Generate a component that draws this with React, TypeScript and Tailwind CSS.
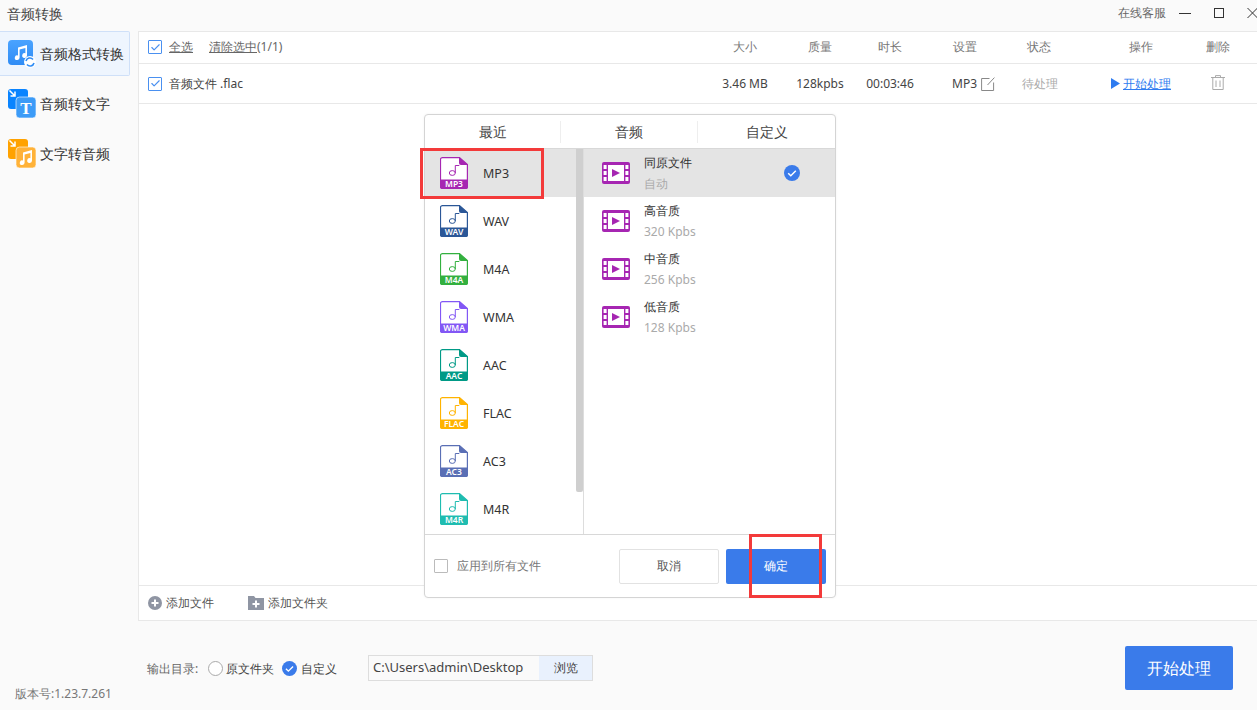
import { Check } from 'lucide-react';

const FONT = 'font-["Noto_Sans","Noto_Sans_CJK_SC",sans-serif]';

const formats = [
    { name: 'MP3', color: '#a626b2' },
    { name: 'WAV', color: '#2b5797' },
    { name: 'M4A', color: '#33b03f' },
    { name: 'WMA', color: '#8257f5' },
    { name: 'AAC', color: '#009a86' },
    { name: 'FLAC', color: '#ffb300' },
    { name: 'AC3', color: '#5a6fb5' },
    { name: 'M4R', color: '#1fbcb0' },
];

const qualities = [
    { name: '同原文件', sub: '自动' },
    { name: '高音质', sub: '320 Kpbs' },
    { name: '中音质', sub: '256 Kpbs' },
    { name: '低音质', sub: '128 Kpbs' },
];

function FileIcon({ name, color }: { name: string; color: string }) {
    return (
        <svg width="28" height="32" viewBox="0 0 28 32" className="shrink-0">
            <path d="M2.5 0.6H19.5L27.4 7.5V29.5a2 2 0 0 1-2 2H2.5a2 2 0 0 1-2-2V2.6a2 2 0 0 1 2-2z" fill="#fff" stroke={color} strokeWidth="1.2" />
            <path d="M19 0l9 8h-7a2 2 0 0 1-2-2z" fill={color} />
            <path d="M0 22.5h28v7a2.5 2.5 0 0 1-2.5 2.5h-23A2.5 2.5 0 0 1 0 29.5z" fill={color} />
            <ellipse cx="12.3" cy="16" rx="3" ry="2.4" fill="none" stroke={color} strokeWidth="1" />
            <path d="M15.3 16V8.5h4" fill="none" stroke={color} strokeWidth="1" />
            <text x="14" y="30.3" textAnchor="middle" fontSize="8.5" fontWeight="600" fill="#fff" fontFamily="Noto Sans, sans-serif">{name}</text>
        </svg>
    );
}

function FilmIcon() {
    return (
        <svg width="28" height="22" viewBox="0 0 28 22" className="shrink-0">
            <rect width="28" height="22" rx="2" fill="#a626b2" />
            <rect x="6" y="3" width="16" height="16" fill="#fff" />
            <rect x="1.6" y="3" width="3" height="4" fill="#fff" />
            <rect x="1.6" y="9" width="3" height="4" fill="#fff" />
            <rect x="1.6" y="15" width="3" height="4" fill="#fff" />
            <rect x="23.4" y="3" width="3" height="4" fill="#fff" />
            <rect x="23.4" y="9" width="3" height="4" fill="#fff" />
            <rect x="23.4" y="15" width="3" height="4" fill="#fff" />
            <path d="M10 7l8 4-8 4z" fill="#a626b2" />
        </svg>
    );
}

function NoteGlyph({ x, y, s }: { x: number; y: number; s: number }) {
    return (
        <g transform={`translate(${x} ${y}) scale(${s})`} fill="#fff">
            <path d="M4 2.5L13 0v10.5a2.4 2.4 0 1 1-1.6-2.2V3L5.6 4.6v8a2.4 2.4 0 1 1-1.6-2.2z" />
        </g>
    );
}

function FormatIcon() {
    return (
        <svg width="28" height="28" viewBox="0 0 28 28" className="shrink-0">
            <defs>
                <linearGradient id="fmt" x1="0" y1="0" x2="0" y2="1">
                    <stop offset="0" stopColor="#4aa3ff" />
                    <stop offset="1" stopColor="#2f8cf5" />
                </linearGradient>
            </defs>
            <rect width="25" height="25" rx="4" fill="url(#fmt)" />
            <NoteGlyph x={6} y={5} s={1} />
            <circle cx="22" cy="22" r="6" fill="#fff" />
            <path d="M18 21a4 4 0 0 1 7-1.5M26 23a4 4 0 0 1-7 1.5" fill="none" stroke="#2f8cf5" strokeWidth="1.6" />
        </svg>
    );
}

function StackIcon({ back, front, children }: { back: string; front: string; children: React.ReactNode }) {
    return (
        <svg width="28" height="29" viewBox="0 0 28 29" className="shrink-0">
            <rect width="20" height="20" rx="3" fill={back} />
            <rect x="8" y="8" width="20" height="21" rx="3.5" fill={front} stroke="#fff" strokeWidth="0.6" />
            <path d="M1.5 1.5l5 5M7 2.5v4.5H2.5" fill="none" stroke="#fff" strokeWidth="1.5" />
            {children}
        </svg>
    );
}

function Checkbox() {
    return (
        <span className="flex h-[14px] w-[14px] shrink-0 items-center justify-center rounded-[1px] border border-[#4a90f0] bg-white">
            <Check size={11} strokeWidth={2.5} className="text-[#4a90f0]" />
        </span>
    );
}

function CheckedDot({ size }: { size: number }) {
    return (
        <svg width={size} height={size} viewBox="0 0 16 16" className="shrink-0">
            <circle cx="8" cy="8" r="8" fill="#3a7bea" />
            <path d="M4.2 8.2l2.6 2.6 5-5" fill="none" stroke="#fff" strokeWidth="1.5" />
        </svg>
    );
}

function SideItem({ icon, label, active }: { icon: React.ReactNode; label: string; active?: boolean }) {
    return (
        <div className={`flex h-[45px] w-[130px] items-center gap-[4px] rounded-r-[2px] border-y border-r pl-[8px] ${active ? 'border-[#cfe0f8] bg-[#eef5fe]' : 'border-transparent'}`}>
            {icon}
            <span className="text-[14px] whitespace-nowrap text-[#333]">{label}</span>
        </div>
    );
}

const COLS = 'grid grid-cols-[556px_100px_50px_90px_60px_88px_116px_38px] items-center text-center';

export default function App() {
    return (
        <div className={`relative flex h-[710px] w-[1257px] flex-col overflow-hidden bg-[#fafafa] ${FONT}`}>
            <header className="flex h-[31px] shrink-0 items-center pb-[5px] pl-[7px]">
                <span className="text-[14px] font-medium text-[#444]">音频转换</span>
                <span className="ml-auto text-[12px] text-[#666]">在线客服</span>
                <svg width="12" height="10" viewBox="0 0 12 10" className="ml-[13px]">
                    <path d="M0 5.5h12" stroke="#333" strokeWidth="1" />
                </svg>
                <svg width="10" height="10" viewBox="0 0 10 10" className="ml-[23px]">
                    <rect x="0.5" y="0.5" width="9" height="9" fill="none" stroke="#333" strokeWidth="1" />
                </svg>
                <svg width="11" height="10" viewBox="0 0 11 10" className="-mr-[1px] ml-[23px]">
                    <path d="M0.5 0l10 10M10.5 0l-10 10" stroke="#333" strokeWidth="1" />
                </svg>
            </header>

            <div className="flex min-h-0 flex-1">
                <aside className="flex w-[138px] shrink-0 flex-col">
                    <SideItem active icon={<FormatIcon />} label="音频格式转换" />
                    <div className="mt-[5px]">
                        <SideItem
                            label="音频转文字"
                            icon={
                                <StackIcon back="#0a84ff" front="#3c9bf7">
                                    <text x="18" y="25" textAnchor="middle" fontSize="17" fontWeight="700" fill="#fff" fontFamily="Liberation Serif, serif">T</text>
                                </StackIcon>
                            }
                        />
                    </div>
                    <div className="mt-[5px]">
                        <SideItem
                            label="文字转音频"
                            icon={
                                <StackIcon back="#ffa200" front="#ffb238">
                                    <NoteGlyph x={11} y={11} s={1} />
                                </StackIcon>
                            }
                        />
                    </div>
                    <div className="mt-auto pb-[7px] pl-[15px] text-[12px] text-[#777]">版本号:1.23.7.261</div>
                </aside>

                <main className="flex min-w-0 flex-1 flex-col">
                    <section className="flex h-[590px] shrink-0 flex-col border-y border-l border-[#e8e8e8] bg-white">
                        <div className={`${COLS} h-[32px] shrink-0 border-b border-[#e8e8e8] pb-[1px] text-[12px] text-[#777]`}>
                            <div className="flex items-center pl-[9px] text-[#666]">
                                <Checkbox />
                                <span className="ml-[7px] underline">全选</span>
                                <span className="ml-[16px] underline">清除选中</span>
                                <span>(1/1)</span>
                            </div>
                            <span>大小</span>
                            <span>质量</span>
                            <span>时长</span>
                            <span>设置</span>
                            <span>状态</span>
                            <span>操作</span>
                            <span>删除</span>
                        </div>
                        <div className={`${COLS} h-[40px] shrink-0 border-b border-[#e8e8e8] text-[12px] text-[#444]`}>
                            <div className="flex items-center pl-[9px]">
                                <Checkbox />
                                <span className="ml-[7px]">音频文件 .flac</span>
                            </div>
                            <span className="whitespace-nowrap">3.46 MB</span>
                            <span className="whitespace-nowrap">128kpbs</span>
                            <span className="whitespace-nowrap">00:03:46</span>
                            <span className="flex items-center justify-center gap-[4px] pl-[17px]">
                                MP3
                                <svg width="14" height="14" viewBox="0 0 14 14" className="shrink-0">
                                    <path d="M8.5 1.5H.6v12h12V5.5M6.5 8L13.4.6" fill="none" stroke="#888" strokeWidth="1" />
                                </svg>
                            </span>
                            <span className="pl-[2px] text-[#aaa]">待处理</span>
                            <span className="flex items-center justify-center gap-[3px] whitespace-nowrap text-[#2f7cf0]">
                                <svg width="9" height="11" viewBox="0 0 9 11" className="shrink-0">
                                    <path d="M0 0l9 5.5L0 11z" fill="#2f7cf0" />
                                </svg>
                                <span className="underline">开始处理</span>
                            </span>
                            <span className="flex justify-center pb-[3px]">
                                <svg width="14" height="15" viewBox="0 0 14 15">
                                    <path d="M0 2.5h14M4.5 2.5V.6h5v1.9M1.8 2.5v12h10.4v-12M5 5.5v6.5M9 5.5v6.5" fill="none" stroke="#aaa" strokeWidth="1" />
                                </svg>
                            </span>
                        </div>
                        <div className="flex-1" />
                        <div className="flex h-[35px] shrink-0 items-center border-t border-[#e8e8e8] pl-[9px] text-[12px] text-[#555]">
                            <svg width="14" height="14" viewBox="0 0 14 14" className="shrink-0">
                                <circle cx="7" cy="7" r="7" fill="#8f95a3" />
                                <path d="M7 3.5v7M3.5 7h7" stroke="#fff" strokeWidth="2" />
                            </svg>
                            <span className="ml-[4px]">添加文件</span>
                            <svg width="16" height="14" viewBox="0 0 16 14" className="ml-[34px] shrink-0">
                                <path d="M0 0h6l1.5 2H16v12H0z" fill="#8f95a3" />
                                <path d="M8 4.5v7M4.5 8h7" stroke="#fff" strokeWidth="2" />
                            </svg>
                            <span className="ml-[4px]">添加文件夹</span>
                        </div>
                    </section>

                    <div className="flex items-start pt-[25px] pl-[9px]">
                        <div className="flex h-[44px] w-[978px] items-center text-[12px] text-[#666]">
                            <span className="w-[61px] shrink-0 pt-[1px] whitespace-nowrap">输出目录:</span>
                            <span className="h-[15px] w-[15px] shrink-0 rounded-full border border-[#aaa] bg-white" />
                            <span className="ml-[3px] pt-[1px] text-[#444]">原文件夹</span>
                            <span className="ml-[8px]"><CheckedDot size={15} /></span>
                            <span className="ml-[4px] pt-[1px] text-[#444]">自定义</span>
                            <div className="ml-[31px] flex h-[26px] w-[225px] border border-[#ddd] bg-[#fafafa]">
                                <span className="flex w-[170px] items-center pl-[4px] text-[13px] text-[#444]">C:\Users\admin\Desktop</span>
                                <span className="flex flex-1 items-center justify-center bg-[#e9f1fd] text-[#444]">浏览</span>
                            </div>
                        </div>
                        <button className="h-[44px] w-[108px] shrink-0 rounded-[2px] bg-[#3a7bea] text-[16px] text-white">开始处理</button>
                    </div>
                </main>
            </div>

            <div className="absolute top-[114px] left-[424px] flex h-[484px] w-[412px] flex-col rounded-[4px] border border-[#d4d4d4] bg-white shadow-[0_0_3px_rgba(0,0,0,0.05)]">
                <div className="flex h-[34px] shrink-0 items-center border-b border-[#d8d8d8] text-[14px] text-[#444]">
                    <span className="w-[136px] border-r border-[#eee] text-center leading-[22px]">最近</span>
                    <span className="w-[137px] border-r border-[#eee] text-center leading-[22px]">音频</span>
                    <span className="flex-1 text-center leading-[22px]">自定义</span>
                </div>
                <div className="flex min-h-0 flex-1">
                    <div className="relative w-[159px] shrink-0 overflow-hidden border-r border-[#ddd]">
                        {formats.map((f, i) => (
                            <div key={f.name} className={`flex h-[48px] w-[151px] items-center gap-[15px] pl-[15px] text-[12.5px] text-[#333] ${i === 0 ? 'bg-[#e4e4e4]' : ''}`}>
                                <FileIcon name={f.name} color={f.color} />
                                <span className="pt-[2px]">{f.name}</span>
                            </div>
                        ))}
                        <div className="absolute top-0 right-0 h-[343px] w-[7px] rounded-b-[2px] bg-[#cfcfcf]" />
                    </div>
                    <div className="min-w-0 flex-1">
                        {qualities.map((q, i) => (
                            <div key={q.name} className={`flex h-[48px] items-center pl-[18px] ${i === 0 ? 'bg-[#e4e4e4]' : ''}`}>
                                <FilmIcon />
                                <div className="ml-[14px] flex w-[140px] flex-col gap-[3px] text-[12px] leading-[18px]">
                                    <span className="text-[#333]">{q.name}</span>
                                    <span className="text-[#aaa]">{q.sub}</span>
                                </div>
                                {i === 0 && <CheckedDot size={16} />}
                            </div>
                        ))}
                    </div>
                </div>
                <div className="flex h-[63px] shrink-0 items-center border-t border-[#d8d8d8] pr-[9px] pl-[9px] text-[12px]">
                    <span className="h-[14px] w-[14px] shrink-0 rounded-[1px] border border-[#bbb]" />
                    <span className="ml-[9px] text-[#777]">应用到所有文件</span>
                    <button className="ml-auto h-[35px] w-[100px] rounded-[2px] border border-[#e2e2e2] bg-white text-[#555]">取消</button>
                    <button className="ml-[7px] h-[35px] w-[100px] rounded-[2px] bg-[#3a7bea] text-white">确定</button>
                </div>
            </div>

            {/* red annotation boxes */}
            <div className="absolute top-[148px] left-[420px] h-[51px] w-[124px] border-[3px] border-[#f33a3a]" />
            <div className="absolute top-[534px] left-[749px] h-[64px] w-[73px] border-[3px] border-[#f33a3a]" />
        </div>
    );
}
